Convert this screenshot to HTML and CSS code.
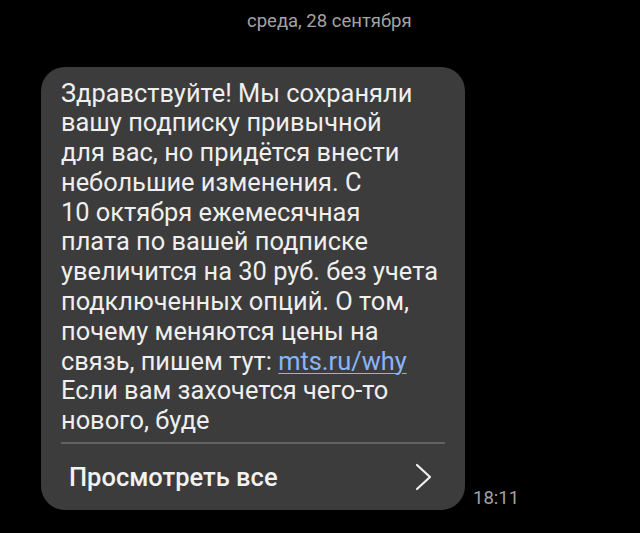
FILE: index.html
```html
<!DOCTYPE html>
<html lang="ru">
<head>
<meta charset="utf-8">
<link rel="stylesheet" href="styles.css">
</head>
<body>
<div class="screen">
  <div class="date">среда, 28 сентября</div>
  <div class="row">
    <div class="bubble">
      <div class="text">Здравствуйте! Мы сохраняли<br>вашу подписку привычной<br>для вас, но придётся внести<br>небольшие изменения. С<br>10 октября ежемесячная<br>плата по вашей подписке<br>увеличится на 30 руб. без учета<br>подключенных опций. О том,<br>почему меняются цены на<br>связь, пишем тут: <span class="link">mts.ru/why</span><br>Если вам захочется чего-то<br>нового, буде</div>
      <div class="sep"></div>
      <div class="footer">
        <span class="more">Просмотреть все</span>
        <svg class="chev" width="18" height="28" viewBox="0 0 18 28"><path d="M2 2 L15 14 L2 26" fill="none" stroke="#f0f0f0" stroke-width="2.2" stroke-linecap="round" stroke-linejoin="round"/></svg>
      </div>
    </div>
    <div class="time">18:11</div>
  </div>
</div>
</body>
</html>
```
FILE: styles.css
```css
html, body {
  margin: 0;
  padding: 0;
  background: #000;
}
.screen {
  width: 640px;
  height: 533px;
  overflow: hidden;
  font-family: Roboto, "Noto Sans", sans-serif;
}
.date {
  height: 42px;
  line-height: 42px;
  padding-left: 247px;
  font-size: 18.5px;
  color: #a3a3a3;
}
.row {
  display: flex;
  align-items: flex-end;
  padding-top: 25px;
  padding-left: 41px;
}
.bubble {
  width: 424px;
  background: #3c3c3c;
  border-radius: 24px;
  box-sizing: border-box;
}
.text {
  padding: 11.5px 20px 0 20px;
  font-size: 25.4px;
  line-height: 29.8px;
  color: #efefef;
  white-space: nowrap;
}
.link {
  color: #8ab4f8;
  text-decoration: underline;
  text-decoration-thickness: 1px;
  text-underline-offset: 3px;
}
.sep {
  margin: 6px 20px 0 20px;
  height: 2px;
  background: #626262;
}
.footer {
  height: 66px;
  display: flex;
  align-items: center;
  justify-content: space-between;
  padding: 0 32px 0 28px;
}
.more {
  font-size: 25.5px;
  font-weight: 500;
  color: #f2f2f2;
}
.chev {
  display: block;
}
.time {
  margin-left: 8px;
  margin-bottom: 1px;
  font-size: 18.5px;
  color: #a3a3a3;
}
```
